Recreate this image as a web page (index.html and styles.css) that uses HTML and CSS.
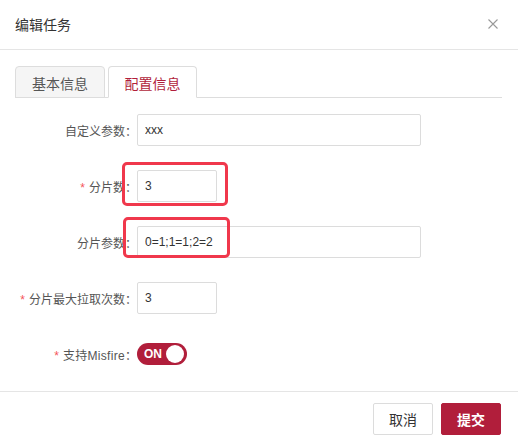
FILE: index.html
```html
<!DOCTYPE html>
<html lang="zh">
<head>
<meta charset="utf-8">
<title>编辑任务</title>
<link rel="stylesheet" href="styles.css">
</head>
<body>
<div class="dialog">
  <header class="dlg-header">
    <span class="dlg-title">编辑任务</span>
    <span class="dlg-close" aria-label="关闭">
      <svg width="10" height="10" viewBox="0 0 10 10"><path d="M0.5 0.5 L9.5 9.5 M9.5 0.5 L0.5 9.5" stroke="#999" stroke-width="1.1" fill="none"/></svg>
    </span>
  </header>
  <div class="dlg-body">
    <div class="tabs">
      <div class="tab">基本信息</div>
      <div class="tab active">配置信息</div>
    </div>
    <form class="form">
      <div class="row">
        <label class="label">自定义参数：</label>
        <div class="ctrl"><input class="input wide" value="xxx" readonly></div>
      </div>
      <div class="row">
        <label class="label"><span class="req">*</span>分片数：</label>
        <div class="ctrl"><input class="input short" value="3" readonly><span class="mark mark-a"></span></div>
      </div>
      <div class="row">
        <label class="label">分片参数：</label>
        <div class="ctrl"><input class="input wide" value="0=1;1=1;2=2" readonly><span class="mark mark-b"></span></div>
      </div>
      <div class="row">
        <label class="label"><span class="req">*</span>分片最大拉取次数：</label>
        <div class="ctrl"><input class="input short" value="3" readonly></div>
      </div>
      <div class="row">
        <label class="label"><span class="req">*</span><span class="latin">支持Misfire</span>：</label>
        <div class="ctrl"><span class="switch"><span class="switch-text">ON</span><span class="knob"></span></span></div>
      </div>
    </form>
  </div>
  <footer class="dlg-footer">
    <button class="btn" type="button">取消</button>
    <button class="btn primary" type="button">提交</button>
  </footer>
</div>
</body>
</html>
```

FILE: styles.css
```css
* { box-sizing: border-box; }
html, body {
  margin: 0;
  padding: 0;
  background: #fff;
}
body {
  font-family: "Liberation Sans", "Noto Sans CJK SC", sans-serif;
  color: #333;
  width: 518px;
  height: 445px;
  overflow: hidden;
}
.dialog {
  display: flex;
  flex-direction: column;
  height: 445px;
}
.dlg-header {
  height: 50px;
  border-bottom: 1px solid #e5e5e5;
  display: flex;
  align-items: center;
  justify-content: space-between;
  padding: 0 20px 2px 15px;
}
.dlg-title {
  font-size: 14px;
  color: #333;
}
.dlg-close {
  display: flex;
  width: 10px;
  height: 10px;
}
.dlg-body {
  flex: 1;
  padding: 16px 16px 0 15px;
}
.tabs {
  display: flex;
  gap: 3px;
  height: 32px;
  border-bottom: 1px solid #ddd;
}
.tab {
  width: 90px;
  height: 32px;
  border: 1px solid #ddd;
  border-radius: 4px 4px 0 0;
  background: #f5f5f5;
  font-size: 14px;
  color: #555;
  display: flex;
  align-items: center;
  justify-content: center;
  padding-top: 2px;
}
.tab.active {
  width: 89px;
  background: #fff;
  color: #b11e3b;
  border-bottom-color: #fff;
}
.form {
  display: flex;
  flex-direction: column;
  gap: 24px;
  padding-top: 16px;
}
.row {
  display: flex;
  align-items: center;
  height: 32px;
}
.label {
  width: 122px;
  text-align: right;
  font-size: 12px;
  color: #555;
  white-space: nowrap;
}
.latin {
  letter-spacing: 0.3px;
}
.req {
  color: #f5545a;
  margin-right: 4px;
}
.ctrl {
  position: relative;
  display: flex;
  align-items: center;
}
.input {
  height: 32px;
  border: 1px solid #dcdcdc;
  border-radius: 2px;
  padding: 0 7px;
  font-family: "Liberation Sans", "Noto Sans CJK SC", sans-serif;
  font-size: 12px;
  color: #333;
  outline: none;
  background: #fff;
}
.input.wide { width: 284px; }
.input.short { width: 80px; }
.mark {
  position: absolute;
  border: 3px solid #f0384c;
  border-radius: 5px;
  pointer-events: none;
}
.mark-a {
  left: -15px;
  top: -8px;
  width: 106px;
  height: 44px;
}
.mark-b {
  left: -14px;
  top: -9px;
  width: 107px;
  height: 41px;
}
.switch {
  position: relative;
  display: inline-flex;
  align-items: center;
  width: 50px;
  height: 22px;
  border-radius: 11px;
  background: #b11e3b;
}
.switch-text {
  color: #fff;
  font-size: 12px;
  font-weight: bold;
  margin-left: 7px;
}
.knob {
  position: absolute;
  right: 3px;
  top: 2px;
  width: 18px;
  height: 18px;
  border-radius: 50%;
  background: #fff;
}
.dlg-footer {
  border-top: 1px solid #e5e5e5;
  height: 54px;
  display: flex;
  align-items: center;
  justify-content: flex-end;
  gap: 8px;
  padding: 0 17px 0 0;
}
.btn {
  width: 60px;
  height: 32px;
  border: 1px solid #dcdcdc;
  border-radius: 2px;
  background: #fff;
  font-family: "Liberation Sans", "Noto Sans CJK SC", sans-serif;
  font-size: 14px;
  color: #333;
  padding: 0;
}
.btn.primary {
  background: #b11e3b;
  border-color: #b11e3b;
  color: #fff;
  font-weight: bold;
}
```
